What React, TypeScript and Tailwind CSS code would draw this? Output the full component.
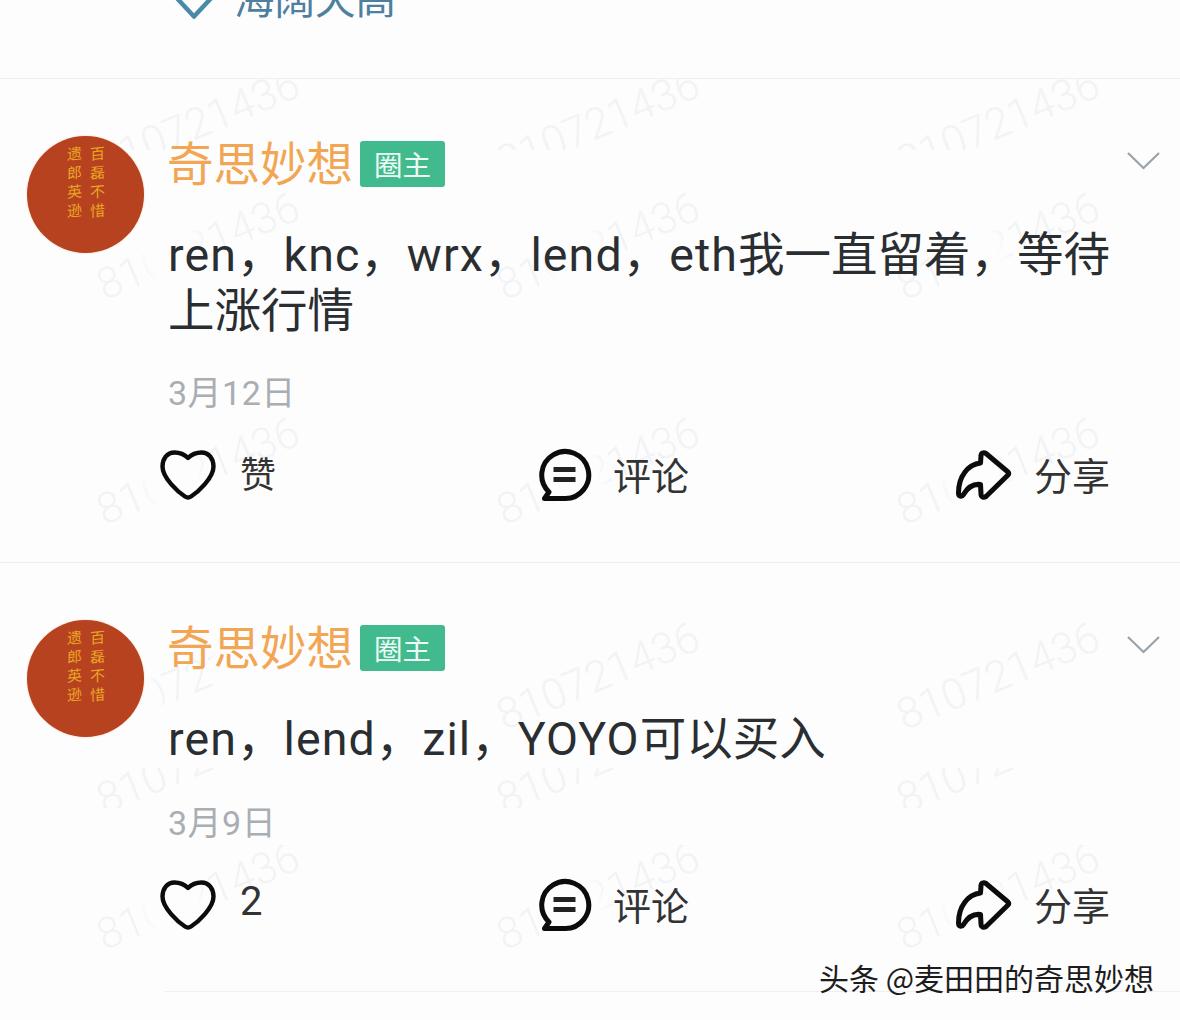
const cjk = "font-['Noto_Sans_CJK_SC','Noto_Sans',sans-serif]";
const latin = "font-['Roboto','Noto_Sans_CJK_SC',sans-serif]";
const gapMask = "[mask-image:linear-gradient(90deg,#000_20%,transparent_27%,transparent_48%,#000_56%)]";
const leftMask = "[mask-image:linear-gradient(90deg,transparent_28%,#000_32%,#000_58%,transparent_62%)]";

function Wm({ cx, cy, stripTop, mask = "" }: { cx: number; cy: number; stripTop: number; mask?: string }) {
  return (
    <span
      className={`absolute -translate-x-1/2 -translate-y-1/2 -rotate-[22.5deg] whitespace-nowrap font-['Roboto',sans-serif] font-light text-[43px] leading-none text-[#f2f3f5] ${mask}`}
      style={{ left: cx, top: cy - stripTop }}
    >
      810721436
    </span>
  );
}

const columns = [198, 598, 998];

function Watermarks() {
  return (
    <div className="absolute inset-0 overflow-hidden">
      <div className="absolute left-0 right-0 top-[79px] h-[71px] overflow-hidden">
        {columns.map((c) => <Wm key={c} cx={c} cy={123} stripTop={79} />)}
      </div>
      <div className="absolute left-0 right-0 top-[190px] h-[120px] overflow-hidden">
        {columns.map((c) => <Wm key={c} cx={c} cy={246} stripTop={190} mask={gapMask} />)}
      </div>
      <div className="absolute left-0 right-0 top-[415px] h-[120px] overflow-hidden">
        {columns.map((c) => <Wm key={c} cx={c} cy={471} stripTop={415} mask={gapMask} />)}
      </div>
      <div className="absolute left-0 right-0 top-[620px] h-[115px] overflow-hidden">
        <Wm cx={198} cy={676} stripTop={620} mask={leftMask} />
        <Wm cx={598} cy={676} stripTop={620} />
        <Wm cx={998} cy={676} stripTop={620} />
      </div>
      <div className="absolute left-0 right-0 top-[768px] h-[40px] overflow-hidden">
        {columns.map((c) => <Wm key={c} cx={c} cy={760} stripTop={768} />)}
      </div>
      <div className="absolute left-0 right-0 top-[845px] h-[110px] overflow-hidden">
        {columns.map((c) => <Wm key={c} cx={c} cy={896} stripTop={845} mask={gapMask} />)}
      </div>
    </div>
  );
}

function Avatar() {
  return (
    <div className={`flex h-[117px] w-[117px] shrink-0 items-start justify-center gap-[7px] rounded-full bg-[#b6421f] pt-[10px] shadow-[0_0_2px_#f6c9a8] ${cjk}`}>
      <span className="[writing-mode:vertical-rl] -skew-y-6 text-[15px] leading-[16px] tracking-[4px] text-[#eba426]">遗郎英逊</span>
      <span className="[writing-mode:vertical-rl] -skew-y-6 text-[15px] leading-[16px] tracking-[4px] text-[#eba426]">百磊不惜</span>
    </div>
  );
}

function Heart() {
  return (
    <svg className="shrink-0" width="56" height="50" viewBox="0 0 56 50" fill="none" stroke="#0c0c0c" strokeWidth="4.4" strokeLinejoin="round">
      <path d="M28 8C24 4 19 2.5 14.5 2.5C7 2.5 2.5 9 2.5 16.5C2.5 28 18 42 25 46.5C27 47.8 29 47.8 31 46.5C38 42 53.5 28 53.5 16.5C53.5 9 49 2.5 41.5 2.5C37 2.5 32 4 28 8Z" />
    </svg>
  );
}

function Comment() {
  return (
    <svg className="shrink-0" width="54" height="54" viewBox="0 0 54 54" fill="none" stroke="#0c0c0c" strokeWidth="5" strokeLinejoin="round" strokeLinecap="round">
      <path d="M11 44A23.5 23.5 0 1 1 27 50.5H6.5Z" />
      <path d="M15.5 21.5H37.5M15.5 31.5H37.5" strokeWidth="5" strokeLinecap="butt" stroke="#222" />
    </svg>
  );
}

function Share() {
  return (
    <svg className="shrink-0" width="56" height="50" viewBox="0 0 56 50" fill="none" stroke="#0c0c0c" strokeWidth="5" strokeLinejoin="round">
      <path d="M30 3.5L52 22C53 23 53 24 52 25L30 46.5C27.5 48 25 47 25 44L24.5 34.5C16 33.5 11 38.5 7.5 44.5C5.5 47.5 2.5 46.5 2.5 43C2.5 26 12 14.5 24.5 13L25 6C25 3 27.5 2 30 3.5Z" />
    </svg>
  );
}

function L({ children }: { children: React.ReactNode }) {
  return <span className="tracking-[1.1px]">{children}</span>;
}

function Post({ body, date, dateGap, like, likeClass, bottom }: { body: React.ReactNode; date: string; dateGap: string; like: string; likeClass: string; bottom: string }) {
  return (
    <div className={`relative flex gap-[24px] pl-[27px] pt-[57px] ${bottom}`}>
      <Avatar />
      <div className="min-w-0 flex-1 pr-[70px]">
        <div className="flex h-[56px] items-center gap-[7px]">
          <span className="-mt-[7px] -ml-[1px] text-[46.5px] leading-[56px] text-[#f2a654]">奇思妙想</span>
          <span className="flex h-[46px] w-[85px] items-center justify-center rounded-[3px] bg-[#41bb8e] text-[28.5px] leading-none text-[#eefaf5]">圈主</span>
          <svg className="ml-auto mr-[-50px] mt-[-6px]" width="33" height="20" viewBox="0 0 33 20" fill="none" stroke="#98a3aa" strokeWidth="2.2">
            <path d="M1 2L16.5 17L32 2" />
          </svg>
        </div>
        <p className={`mt-[35px] w-[945px] text-[46.5px] leading-[56px] text-[#2b2e31] ${latin}`}>{body}</p>
        <div className={`${dateGap} h-[42px] text-[34px] leading-[42px] tracking-[0.5px] text-[#a9aeb3] ${latin}`}>{date}</div>
        <div className="-ml-[8px] mt-[31px] flex h-[60px] w-[950px] items-center justify-between">
          <div className="flex w-[111px] items-center gap-[24px]">
            <Heart />
            <span className={`${likeClass} text-[#333]`}>{like}</span>
          </div>
          <div className="flex items-center gap-[21px]">
            <Comment />
            <span className="-mt-[2px] text-[38px] leading-none text-[#333]">评论</span>
          </div>
          <div className="flex items-center gap-[22px]">
            <Share />
            <span className="-mt-[2px] text-[38px] leading-none text-[#333]">分享</span>
          </div>
        </div>
      </div>
    </div>
  );
}

export default function App() {
  return (
    <div className={`relative h-[1020px] w-[1180px] overflow-hidden bg-[#fdfdfe] ${cjk}`}>
      <Watermarks />
      <div className="relative">
        <header className="flex h-[79px] items-start gap-[18px] overflow-hidden border-b border-[#f0f0f1] pl-[172px]">
          <svg className="shrink-0" width="44" height="20" viewBox="0 0 44 20" fill="none" stroke="#4a8aa8" strokeWidth="4.5" strokeLinejoin="round">
            <path d="M1 -6L22 16.5L43 -6" />
          </svg>
          <span className="-mt-[23px] text-[40.5px] leading-[40px] text-[#4f7f9f]">海阔天高</span>
        </header>
        <div className="border-b border-[#efeff0]">
          <Post
            body={<><L>ren</L>，<L>knc</L>，<L>wrx</L>，<L>lend</L>，<L>eth</L>我一直留着，等待上涨行情</>}
            date="3月12日"
            dateGap="mt-[33px]"
            like="赞"
            likeClass="-mt-[6px] text-[36px] leading-none"
            bottom="pb-[57px]"
          />
        </div>
        <Post
          body={<><L>ren</L>，<L>lend</L>，<L>zil</L>，<L>YOYO</L>可以买入</>}
          date="3月9日"
          dateGap="mt-[35px]"
          like="2"
          likeClass={`-mt-[6px] text-[40px] leading-none ${latin}`}
          bottom="pb-[56px]"
        />
        <div className="ml-[165px] border-t border-[#f0f0f1]" />
      </div>
      <div className="absolute left-[819px] top-[958px] whitespace-nowrap text-[30px] leading-[38px] text-[#1c1c1c] [text-shadow:0_0_1px_#fff]">
        头条 @麦田田的奇思妙想
      </div>
    </div>
  );
}
